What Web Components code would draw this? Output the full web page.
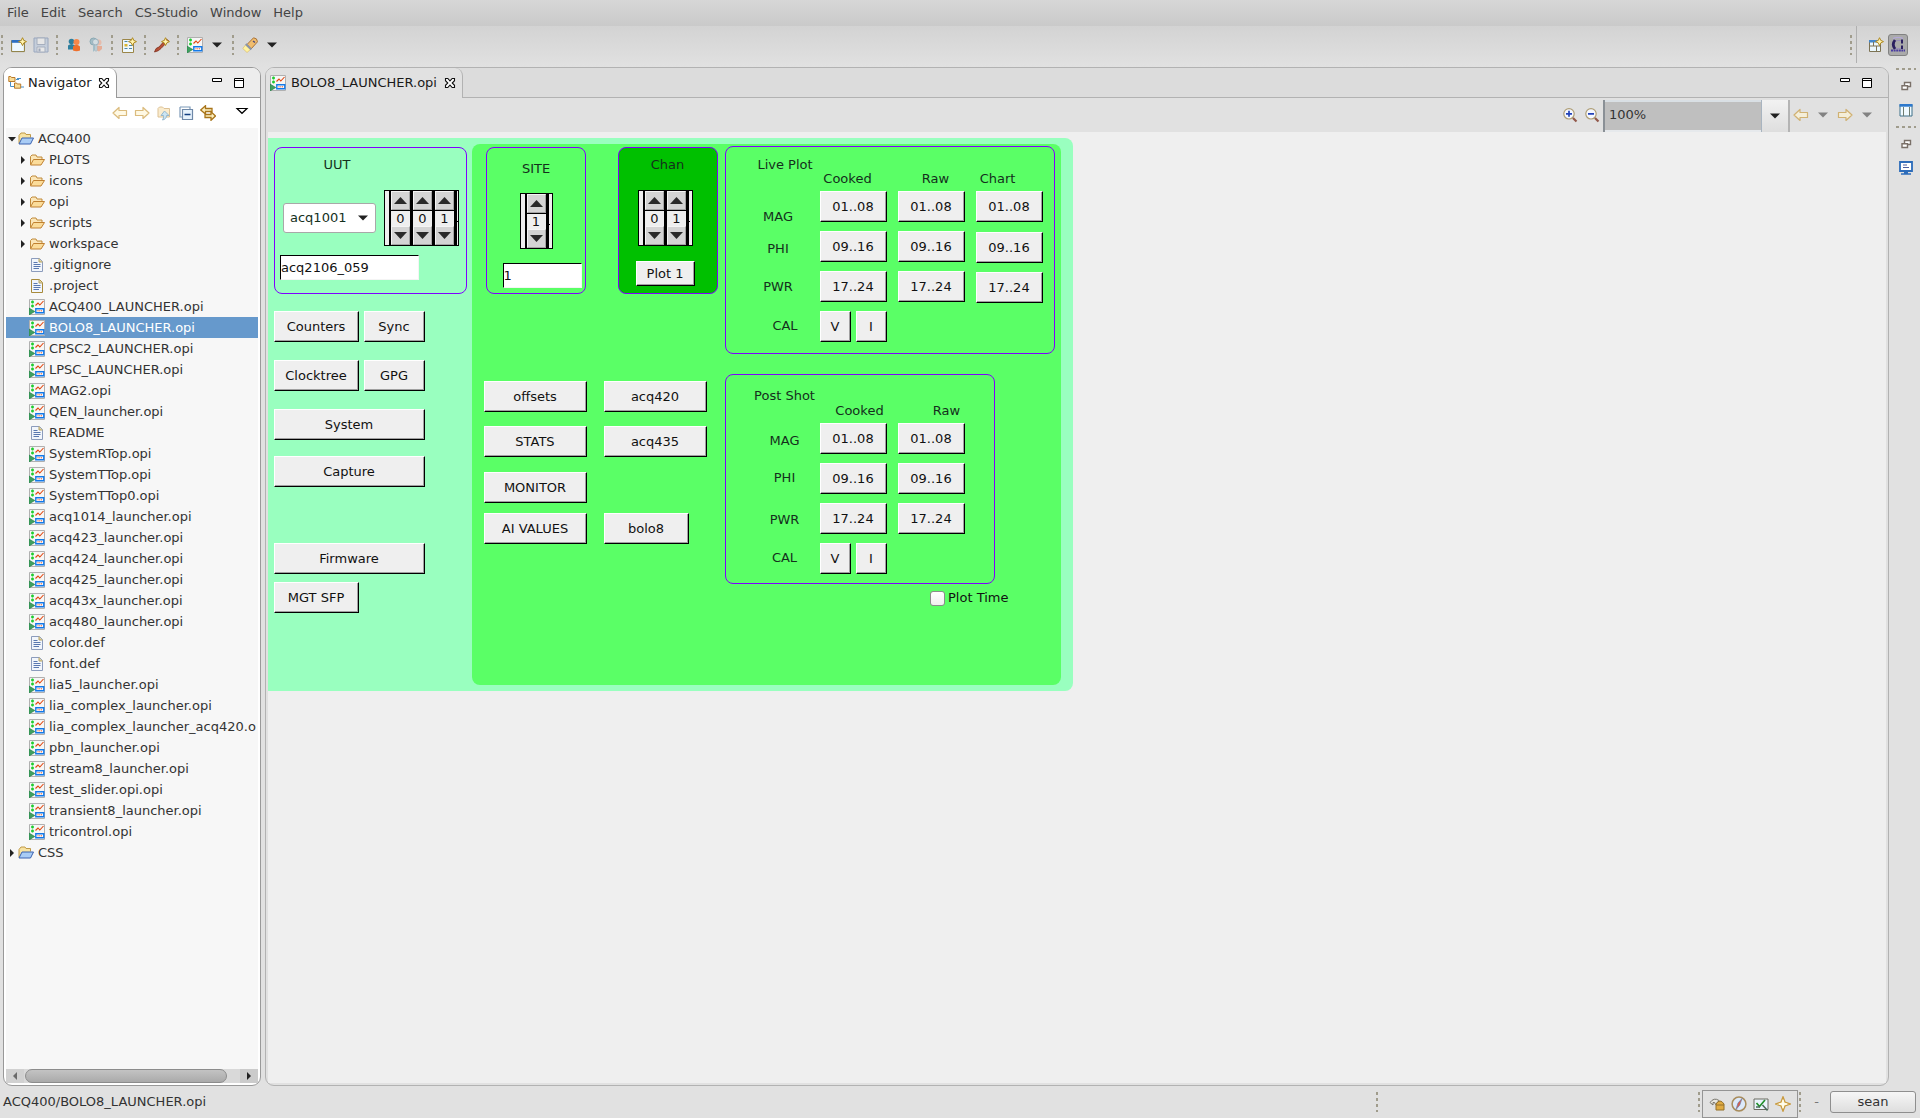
<!DOCTYPE html>
<html lang="en">
<head>
<meta charset="utf-8">
<title>CS-Studio</title>
<style>
html,body{margin:0;height:100%}
body{font-family:"DejaVu Sans",sans-serif;font-size:13px;line-height:20px;color:#333;background:#e1e1e1;overflow:hidden}
</style>
</head>
<body>
<cs-workbench></cs-workbench>
<script>
const reset = `*{box-sizing:border-box}button,input,select{font:inherit;color:inherit;margin:0;padding:0;border:0;border-radius:0;background:none}`;
function define(name, html, setup) {
  const t = document.createElement('template');
  t.innerHTML = html;
  customElements.define(name, class extends HTMLElement {
    constructor() {
      super();
      this.attachShadow({mode: 'open'});
    }
    connectedCallback() {
      if (this.shadowRoot.firstChild) return;
      this.shadowRoot.append(t.content.cloneNode(true));
      if (setup) setup.call(this, this.shadowRoot);
    }
  });
}

const arrow = (d, o) => `<path d="${d}" fill="#fff6d6" stroke="#c89838" stroke-width="1.2" stroke-linejoin="round" opacity="${o}"/>`;
const star = '<path d="M11.5 .7l1.3 2.7 2.7 1.2-2.7 1.3-1.3 2.7-1.2-2.7-2.8-1.3 2.8-1.2z" fill="#fff3b0" stroke="#b08a20"/>';
const page = (edge) => `<path d="M2.5 1.500h8l3 3v10h-11z" fill="#f2f6fc" stroke="${edge}"/><path d="M10 1.500v3.500h3.500" fill="#e2d49a" stroke="#b5a368"/><path d="M4.500 5.500h4M4.500 7.500h7M4.500 9.500h7M4.500 11.500h5.500" stroke="#5a78b0"/>`;
const icons = {
  opi: '<path d="M.5.500h15v15h-15z" fill="#f6f6f6" stroke="#b0b0b0"/><path d="M2 3h3M3.500 1.500v3M2 7h3M3.500 5.500v3" stroke="#1fcc2f" stroke-width="1.500"/><path d="M6.500 6.500L9 4l1.800 2 3.700-4" fill="none" stroke="#e2470f" stroke-width="1.100"/><path d="M6.800 9.800h8v4h-8z" fill="#fff" stroke="#1379e8" stroke-width="1.400"/><path d="M8.500 11.800h5" stroke="#e2470f" stroke-dasharray="1 .8"/><path d="M0 9l5.800 3.500L0 16z" fill="#3fa060" stroke="#1e7d42" stroke-width=".6"/>',
  project: '<path d="M1 12.500V4.500L3 2h4l1 1.500h4.500v3" fill="#f8e3a2" stroke="#c09a48"/><path d="M1 13L4 7h11.500l-3 6z" fill="#a9ccf5" stroke="#3a62b0"/>',
  folder: '<path d="M1.500 12.500v-8L3 3h4l1 2h5v2.500" fill="#fbe6b8" stroke="#c08a3a"/><path d="M1.500 13L4.500 7.500h11L12 13z" fill="#fbdc9a" stroke="#c08030"/>',
  file: page('#8c9cbc'), filegold: page('#a88a3a'),
  nav: '<path d="M.8 1.500h2l.7 1H7v4H.8zM6.500 8h2l.7 1h3.500v4.200H6.500z" fill="#f8dc98" stroke="#b97a2a"/><path d="M2.500 7v4.500H6M8 4.500h3M13 12h3" stroke="#4a90c8" fill="none"/><path d="M9 3.500h4" stroke="#4a90c8"/>',
  x: '<path d="M3.500 3.500h2.300L8 5.900l2.200-2.400h2.300v2.200L10.200 8l2.300 2.300v2.200h-2.300L8 10.100l-2.200 2.400H3.500v-2.200L5.800 8 3.500 5.700z" fill="#fff" stroke="#111" stroke-width="1.100"/>',
  min: '<path d="M3.500 3.500h9v3h-9z" fill="#fff" stroke="#000"/>',
  max: '<path d="M3.500 3.500h9v9h-9zM3.500 5.500h9" fill="#fff" stroke="#000"/>',
  back: arrow('M1 8l6-5.500v3h7.500v5H7v3z', .65), fwd: arrow('M15 8L9 2.500v3H1.500v5H9v3z', .65),
  up: '<g opacity=".6"><path d="M2 12V3.500L3.500 2h3L8 3.500h5.500V12z" fill="#f7dfae" stroke="#c79a50"/><path d="M8.500 6l4.500 4.500h-2.500c0 2.500-1.500 4-4 4.500 1-1.500 1.200-2.500 1-4.500H5z" fill="#a8d4ec" stroke="#4f88ac"/></g>',
  collapse: '<path d="M2 2h10v2M2 2v10h2" fill="none" stroke="#7d9ab8" stroke-width="1.200"/><path d="M4.500 4.500h10v10h-10z" fill="#e6f2fc" stroke="#6e88a8" stroke-width="1.200"/><path d="M6.500 9.500h6" stroke="#123f80" stroke-width="1.500"/>',
  link: '<path d="M.7 5L5.500.700V3.500H12v3H5.500v2.500zM15.500 11L11 6.800v2.700H5v3h6v2.800z" fill="#fdf0c0" stroke="#a8741a" stroke-width="1.300"/>',
  menu: '<path d="M3 3.500h10L8 8.300z" fill="#fff" stroke="#000" stroke-width="1.200"/>',
  tri: '<path d="M3 5.500h10L8 10.500z" fill="#222"/>', trig: '<path d="M3 5.500h10L8 10.500z" fill="#828282"/>',
  rt: '<path d="M6 4v8l4-4z" fill="#222"/>', dn: '<path d="M4 6h8l-4 4.500z" fill="#222"/>',
  neww: '<path d="M.6 3.600h12.800v11H.6z" fill="#eef8ff" stroke="#8a7a3c"/><path d="M.6 3h12.800v2.800H.6z" fill="#2d6fc2"/>' + star,
  save: '<g opacity=".55"><path d="M1 1h14v14H1z" fill="#b5c6dd" stroke="#667fa8"/><path d="M4 1h8v6.500H4zM4 10h8v5H4z" fill="#f2f2f2" stroke="#7c8ca8"/><path d="M5.500 11.500h2v3h-2z" fill="#6d7fa0"/></g>',
  users: '<circle cx="5.500" cy="4.500" r="2.800" fill="#2f7f9e"/><path d="M2 12.500V8.500q3.500-3 7 0v4z" fill="#2f7f9e"/><circle cx="10.500" cy="5" r="3" fill="#f5874a"/><path d="M7 13.500v-4q3.500-3.500 7 0v4q-3.500 1.500-7 0z" fill="#ee702c"/>',
  key: '<g opacity=".55"><circle cx="5.500" cy="4.500" r="3.500" fill="#78a9ba" stroke="#4b8294"/><path d="M5 8v7l2-2V8" fill="#78a9ba"/><circle cx="10.500" cy="5.500" r="3" fill="#f2a588"/><path d="M8 9h6v3l-3 2.500-2-1z" fill="#f08a60"/><circle cx="7.500" cy="5" r="3" fill="#cfe2ea" stroke="#6b93a8"/><path d="M7 8h2v6H7z" fill="#b9d2de" stroke="#6b93a8" stroke-width=".6"/></g>',
  doc: '<path d="M1.500 2.500h11v13h-11z" fill="#eef7fb" stroke="#9b8648"/><path d="M3.500 4.500h3M8 8.500h3M3.500 11.500h3M8 11.500h3" stroke="#4c88a8"/><path d="M3.500 7h3v2.500h-3z" fill="#d9b532"/>' + star,
  brush: '<path d="M.5 15q1-4.500 4.500-5L12 2l2.500 1.500L7 11.500Q5 14 .5 15z" fill="#b85036" stroke="#7c3020" stroke-width=".8"/>' + star,
  torch: '<path d="M.8 11.500L3.500 8l5 4.500-3.500 3z" fill="#fff3a0" stroke="#d6b460" stroke-width=".6"/><path d="M5 7.500L11.500.800q3.800.2 4 4L9 12z" fill="#f1bd6e" stroke="#a8733a"/><path d="M3.800 7l5.500 5.500" stroke="#8a94a8" stroke-width="2"/><path d="M11 4l2 1.500" stroke="#4a4a80" stroke-width="1.500"/>',
  zin: '<circle cx="7" cy="6.800" r="5.200" fill="#f5f8ff" stroke="#ae9d74" stroke-width="1.200"/><path d="M4 6.800h6M7 3.800v6" stroke="#2343b8" stroke-width="1.700"/><path d="M11 11l3.500 3.500" stroke="#92584a" stroke-width="2.200"/>',
  zout: '<circle cx="7" cy="6.800" r="5.200" fill="#f5f8ff" stroke="#ae9d74" stroke-width="1.200"/><path d="M4 6.800h6" stroke="#2343b8" stroke-width="1.700"/><path d="M11 11l3.500 3.500" stroke="#92584a" stroke-width="2.200"/>',
  persp: '<path d="M1.500 3.500h11v11h-11z" fill="#eaf7fc" stroke="#7c7354"/><path d="M1 3h12v2.500H1z" fill="#4387cc"/><path d="M1.500 9h11M5.500 5v4M8.500 9v5.500" stroke="#7c7354"/>' + star,
  css: '<path d="M3 1.500Q8-.5 13 1.500" fill="none" stroke="#b4a8d8" stroke-width="1.200"/><path d="M11.500 3.500H7Q4 3.500 4 7.500T7 11.500h4.500" fill="none" stroke="#9a8fb8" stroke-width="1"/><path d="M5 3Q1.500 7.500 5 12" fill="none" stroke="#2b2060" stroke-width="2.800"/><path d="M12 2.500v4M12 8.500v3.500" stroke="#2b2060" stroke-width="2"/><path d="M1 13.500h14" stroke="#4a3ca0" stroke-width="2" stroke-dasharray="2 .6"/>',
  restore: '<path d="M6.500 4.500h6v4h-6z" fill="#fff" stroke="#7a7068" stroke-width="1.400"/><path d="M4 7.700h5.500v3.800H4z" fill="#fff" stroke="#7a7068" stroke-width="1.400"/>',
  win: '<path d="M2 2.500h12v11.500H2z" fill="#f0faff" stroke="#3f7089"/><path d="M1.500 2h13v2.700h-13z" fill="#2d79cc"/><path d="M5.500 5v9M11.500 5v9" stroke="#6f7d70"/>',
  mon: '<path d="M2 2h12v9H2z" fill="#fff" stroke="#2c6cba" stroke-width="1.800"/><path d="M5 5h4M5 7.500h6" stroke="#4d5fa0"/><path d="M6 12.500h4M3 14h10" stroke="#2c6cba" stroke-width="1.300"/>',
  lock: '<path d="M1 6.500Q5 1 10 4.500l-3.500 4Q6 5.500 4 6.500v2.500z" fill="#e8e6de" stroke="#78756c"/><path d="M7 14V8q4-6 8 0v6z" fill="#e0ab42" stroke="#94702a"/><path d="M7 9h8" stroke="#94702a"/>',
  compass: '<circle cx="8" cy="8" r="6.900" fill="#dce9fa" stroke="#a88c5c" stroke-width="1.500"/><path d="M11 2.500L8.800 9 5 13.500 7 7z" fill="#e05a48" stroke="#6a80a8" stroke-width=".7"/>',
  check: '<path d="M1 3h14v10.500H1z" fill="#eaf4fc" stroke="#6b6b60"/><path d="M3.500 7l3 3.500L12 4" fill="none" stroke="#22902c" stroke-width="1.700"/><path d="M3 11h4M9.500 9l5 5.500" stroke="#4a6a5a" stroke-width="1.500"/>',
  spark: '<path d="M8 .8l2 5.200 5.200 2-5.200 2-2 5.200-2-5.200L.8 8 6 6z" fill="#fff6c8" stroke="#c89a40" stroke-width="1.300"/><path d="M8 4v8M4 8h8" stroke="#fff"/>'
};
customElements.define('ui-icon', class extends HTMLElement {
  static observedAttributes = ['name'];
  constructor() {
    super();
    this.attachShadow({mode: 'open'}).innerHTML = `<style>:host{display:block;flex:none;width:16px;height:16px}svg{display:block}</style><svg width="16" height="16" viewBox="0 0 16 16" aria-hidden="true"></svg>`;
  }
  attributeChangedCallback(_, old, value) {
    this.shadowRoot.querySelector('svg').innerHTML = icons[value] || '';
  }
});

define('tool-button', `<style>${reset}:host{display:block;flex:none}button{display:block}</style><button><ui-icon></ui-icon></button>`,
  function (r) {
    const n = this.getAttribute('icon');
    r.querySelector('button').setAttribute('aria-label', n);
    r.querySelector('ui-icon').setAttribute('name', n);
  });

define('drag-handle', `<style>:host{display:block;flex:none;width:2px;height:20px;background:repeating-linear-gradient(#a09c8c 0 3px,transparent 3px 6px)}:host([flat]){width:20px;height:2px;background:repeating-linear-gradient(90deg,#a09c8c 0 3px,transparent 3px 6px)}</style>`);

define('menu-bar', `<style>${reset}:host{display:block;background:linear-gradient(#d7d7d7,#cacaca)}nav{display:flex;gap:12px;padding:3px 7px}button{color:#444;line-height:20px}</style>
<nav><button>File</button><button>Edit</button><button>Search</button><button>CS-Studio</button><button>Window</button><button>Help</button></nav>`);

define('main-toolbar', `<style>${reset}
:host{display:flex;align-items:center;box-sizing:border-box;height:41px;padding:0 0 4px 1px;background:linear-gradient(#d3d3d3,#e1e1e1)}
.g{display:flex;gap:6px;align-items:center;padding:0 7px 0 8px}
.end{margin-left:auto;display:flex;align-items:center;align-self:stretch}
.rule{width:1px;align-self:stretch;background:#b0b0b0;margin:0 11px 0 4px}
.on{margin-left:4px;margin-right:12px;border:1px solid #828282;border-radius:3px;background:#aaa;padding:2px 1px}
</style>
<drag-handle></drag-handle><div class="g"><tool-button icon="neww"></tool-button><tool-button icon="save"></tool-button></div>
<drag-handle></drag-handle><div class="g"><tool-button icon="users"></tool-button><tool-button icon="key"></tool-button></div>
<drag-handle></drag-handle><div class="g"><tool-button icon="doc"></tool-button></div>
<drag-handle></drag-handle><div class="g"><tool-button icon="brush"></tool-button></div>
<drag-handle></drag-handle><div class="g"><tool-button icon="opi"></tool-button><tool-button icon="tri"></tool-button></div>
<drag-handle></drag-handle><div class="g"><tool-button icon="torch"></tool-button><tool-button icon="tri"></tool-button></div>
<div class="end"><drag-handle></drag-handle><div class="rule"></div><tool-button icon="persp"></tool-button><tool-button class="on" icon="css"></tool-button></div>`);

define('view-panel', `<style>${reset}
:host{--line:#999;--tab:#fff;--head:#ededed;display:flex;flex-direction:column;min-width:0;box-sizing:border-box;border:1px solid var(--line);border-radius:9px;background:var(--tab);overflow:hidden}
:host([kind=editor]){--line:#b2b2b2;--tab:#e1e1e1;--head:#dcdcdc}
header{display:flex;height:30px;background:linear-gradient(var(--line),var(--line)) bottom/100% 1px no-repeat var(--head)}
.tab{display:flex;align-items:center;gap:4px;padding:0 4px 0 4px;background:var(--tab);border-right:1px solid var(--line);border-radius:0 8px 0 0;color:#1a1a1a}
:host([kind=editor]) .tab{gap:5px}
.ctl{margin-left:auto;display:flex;gap:6px;align-items:center;padding-right:13px}
.bar{display:flex;align-items:center;justify-content:flex-end}
.body{flex:1;min-height:0;display:flex;flex-direction:column}
</style>
<header><div class="tab"><ui-icon></ui-icon><slot name="title"></slot><tool-button icon="x"></tool-button></div>
<div class="ctl"><tool-button icon="min"></tool-button><tool-button icon="max"></tool-button></div></header>
<div class="bar"><slot name="bar"></slot></div><div class="body"><slot></slot></div>`,
  function (r) { r.querySelector('ui-icon').setAttribute('name', this.getAttribute('icon')); });

define('nav-bar', `<style>${reset}:host{display:flex;gap:6px;align-items:center;height:30px;padding:0 10px 0 0}.m{margin-left:12px}</style>
<tool-button icon="back"></tool-button><tool-button icon="fwd"></tool-button><tool-button icon="up"></tool-button><tool-button icon="collapse"></tool-button><tool-button icon="link"></tool-button><tool-button class="m" icon="menu"></tool-button>`);

define('tree-item', `<style>${reset}
:host{display:flex;align-items:center;height:21px;padding-left:11px;white-space:nowrap}
:host([root]){padding-left:0}
:host([selected]){background:#6699cc;color:#fff}
.a{width:11px;height:16px;margin-right:1px;display:flex;justify-content:center;flex:none}
.t{margin-left:4px}</style><span class="a"></span><ui-icon class="i"></ui-icon><span class="t"><slot></slot></span>`,
  function (r) {
    const a = this.getAttribute('arrow');
    if (a) r.querySelector('.a').innerHTML = `<ui-icon name="${a}"></ui-icon>`;
    r.querySelector('.i').setAttribute('name', this.getAttribute('icon'));
    this.setAttribute('role', 'treeitem');
  });

define('file-tree', `<style>${reset}
:host{flex:1;display:flex;flex-direction:column;margin:0 2px 2px;background:#f7f7f7;overflow:hidden}
.rows{flex:1;overflow:hidden}
.sb{display:flex;height:14px;background:#d9d9d9}
.sb button{width:18px;background:#cbcbcb;display:flex;justify-content:center;align-items:center}
.sb button:first-child{opacity:.6}
.sb button:first-child ui-icon{rotate:180deg}
.track{flex:1;display:flex;padding-left:1px}.thumb{width:94%;border:1px solid #8c8c8c;border-radius:7px;background:linear-gradient(#c3c3c3,#aaa)}
</style><div class="rows" role="tree"></div><div class="sb"><button aria-label="Scroll left"><ui-icon name="rt"></ui-icon></button><div class="track"><div class="thumb"></div></div><button aria-label="Scroll right"><ui-icon name="rt"></ui-icon></button></div>`,
  function (r) {
    const row = (text, icon, extra = '') => `<tree-item icon="${icon}" ${extra}>${text}</tree-item>`;
    let h = row('ACQ400', 'project', 'root arrow="dn"');
    h += ['PLOTS', 'icons', 'opi', 'scripts', 'workspace'].map(n => row(n, 'folder', 'arrow="rt"')).join('');
    h += ['.gitignore', '.project', 'ACQ400_LAUNCHER.opi', 'BOLO8_LAUNCHER.opi', 'CPSC2_LAUNCHER.opi', 'LPSC_LAUNCHER.opi', 'MAG2.opi', 'QEN_launcher.opi', 'README', 'SystemRTop.opi', 'SystemTTop.opi', 'SystemTTop0.opi', 'acq1014_launcher.opi', 'acq423_launcher.opi', 'acq424_launcher.opi', 'acq425_launcher.opi', 'acq43x_launcher.opi', 'acq480_launcher.opi', 'color.def', 'font.def', 'lia5_launcher.opi', 'lia_complex_launcher.opi', 'lia_complex_launcher_acq420.opi', 'pbn_launcher.opi', 'stream8_launcher.opi', 'test_slider.opi.opi', 'transient8_launcher.opi', 'tricontrol.opi']
      .map(n => row(n === 'lia_complex_launcher_acq420.opi' ? 'lia_complex_launcher_acq420.o' : n, n.endsWith('.opi') ? 'opi' : n === '.project' ? 'filegold' : 'file', n.startsWith('BOLO8') ? 'selected' : '')).join('');
    h += row('CSS', 'project', 'root arrow="rt"');
    r.querySelector('.rows').innerHTML = h;
  });

define('zoom-bar', `<style>${reset}
:host{display:flex;align-items:center;gap:6px;height:34px;padding-right:13px}
.combo{display:flex;align-self:stretch;width:187px;margin:2px -3px 0 -3px;border-left:2px solid #8a9096;border-right:2px solid #b4b4b4}
input{flex:1;min-width:0;background:#bfbfbf;color:#333;padding:0 4px 2px;border-top:2px solid #d9dfe4;border-bottom:2px solid #e6e9ec}
.combo button{width:27px;display:flex;align-items:center;justify-content:center;background:linear-gradient(#f2f2f2,#dedede);border-left:1px solid #a8b4c0}
</style>
<tool-button icon="zin"></tool-button><tool-button icon="zout"></tool-button><div class="combo"><input aria-label="Zoom" value="100%"><button aria-label="Zoom levels"><ui-icon name="tri"></ui-icon></button></div>
<tool-button icon="back"></tool-button><tool-button icon="trig"></tool-button><tool-button icon="fwd"></tool-button><tool-button icon="trig"></tool-button>`);

define('action-button', `<style>${reset}
:host{display:block;flex:none;width:67px;height:31px}
:host([w="31"]){width:31px}:host([w="61"]){width:61px}:host([w="85"]){width:85px}:host([w="103"]){width:103px}:host([w="151"]){width:151px}
:host([small]){width:59px;height:25px}
button{display:block;width:100%;height:100%;color:#111;background:#efefef;border:1px solid;border-color:#fff #000 #000 #fff;box-shadow:inset -1px -1px #a0a0a0;white-space:nowrap;line-height:20px;padding-right:1px}
</style><button><slot></slot></button>`);

define('group-box', `<style>:host{display:flex;flex-direction:column;flex:none;box-sizing:border-box;border:1px solid #8000ff;border-radius:8px;color:#14301c}</style><slot></slot>`);

define('thumb-wheel', `<style>${reset}
:host{display:inline-flex;flex:none;border:1px solid #000;background:#efefef;color:#111}
.d{display:flex;margin-left:4px;background:#000;padding-left:2px}
.c{width:22px;padding-right:3px}
button{display:flex;align-items:center;justify-content:center;width:19px;height:19px;background:#d4d4d4;border:1px solid;border-color:#f4f4f4 #a4a4a4 #a4a4a4 #f4f4f4}
output{display:block;height:15px;margin:1px 0 0;line-height:15px;text-align:center;background:#efefef}
.e{width:3px}:host([tight]) .e{width:1px}
.p{width:1px;height:1px;background:#000;margin-top:30px}
</style><div class="d"></div><div class="e"><div class="p"></div></div>`,
  function (r) {
    r.querySelector('.d').innerHTML = [...this.getAttribute('value')].map(v => `<div class="c"><button aria-label="Increase"><svg width="13" height="7"><path d="M0 7h13L6.500 0z" fill="#2a2a2a"/></svg></button><output>${v}</output><button aria-label="Decrease"><svg width="13" height="7"><path d="M0 0h13L6.500 7z" fill="#2a2a2a"/></svg></button></div>`).join('');
  });

define('text-entry', `<style>${reset}:host{display:block;flex:none}input{display:block;width:100%;height:25px;background:#fff;color:#111;border:1px solid;border-color:#000 #f4f4f4 #f4f4f4 #000}</style><input>`,
  function (r) {
    const i = r.querySelector('input');
    i.value = this.getAttribute('value');
    i.setAttribute('aria-label', this.getAttribute('label'));
  });

define('plot-matrix', `<style>${reset}
:host{display:flex;width:328px;height:206px}
:host([post]){width:268px;height:208px}
.lab{width:94px;display:grid;text-align:center;white-space:nowrap;padding-top:8px;grid-template-rows:52px 32px 38px 39px 20px}
.lab span{padding-left:10px}.lab .w{padding-left:24px}
:host([post]) .lab{padding-top:11px;grid-template-rows:45px 37px 42px 38px 20px}
:host([post]) .lab span{padding-left:23px}
.col{display:flex;flex-direction:column;gap:9px;width:67px;margin-right:11px;padding-top:22px}
:host([post]) .col{padding-top:26px}
.h{flex:none;text-align:center;height:22px;margin-bottom:-9px;white-space:nowrap}
.cooked{padding-right:12px}.raw{padding-left:8px}.chart{padding-right:24px}
.chart+*{margin-bottom:1px}
:host([post]) .cooked{padding:0 0 0 12px}:host([post]) .raw{padding-left:30px}
.two{display:flex;gap:5px}
.col:last-child{margin-right:0}
</style>
<div class="lab"><span class="w"><slot></slot></span><span>MAG</span><span>PHI</span><span>PWR</span><span class="w">CAL</span></div>
<div class="col"><div class="h cooked">Cooked</div><action-button>01..08</action-button><action-button>09..16</action-button><action-button>17..24</action-button><div class="two"><action-button w="31">V</action-button><action-button w="31">I</action-button></div></div>
<div class="col"><div class="h raw">Raw</div><action-button>01..08</action-button><action-button>09..16</action-button><action-button>17..24</action-button></div>`,
  function (r) {
    if (!this.hasAttribute('post'))
      r.append(Object.assign(document.createElement('div'), {className: 'col', innerHTML: '<div class="h chart">Chart</div><action-button>01..08</action-button><action-button>09..16</action-button><action-button>17..24</action-button>'}));
  });

define('opi-display', `<style>${reset}
:host{display:flex;align-self:flex-start;flex:none;background:#99ffbf;border-radius:0 8px 8px 0;color:#111}
.left{width:204px;padding:9px 0 0 6px;display:flex;flex-direction:column;align-items:flex-start}
.uut{width:193px;height:147px;padding-top:7px}
.uut .l{width:124px;text-align:center}
.r{display:flex;align-items:center}
.uut .r{margin:15px 0 9px;padding-left:8px;gap:8px}
.sel{display:grid;align-items:center;width:93px}
.sel>*{grid-area:1/1}.sel ui-icon{justify-self:end;margin-right:5px;pointer-events:none}
select{appearance:none;width:93px;height:30px;background:#fff;border:1px solid #a8a8a8;border-radius:3px;padding:0 6px}
.uut text-entry{width:139px;margin-left:5px}
.b{display:flex;gap:5px}
.b1{margin-top:17px}.b2{margin-top:18px}.b3{margin-top:16px}.b4{margin-top:56px}.b5{margin-top:8px}
.main{margin:6px 12px 6px 0;background:#5aff66;border-radius:8px;display:flex;width:589px;padding-bottom:76px}
.mid{width:253px;padding-top:3px}
.tops{display:flex;gap:32px;padding-left:14px;margin-bottom:87px}
.site,.chan{width:100px;height:147px;align-items:center}
.site{padding-top:11px}.site thumb-wheel{margin:14px 0}.site text-entry{width:79px;margin-left:12px}
.chan{padding:7px 5px 0 0;background:#00c000}.chan div{padding-left:4px}.chan thumb-wheel{margin:15px 0}
.row{display:flex;gap:17px;padding-left:12px;margin-bottom:14px}.row.m{margin-bottom:15px}.row.n{margin-bottom:10px}
.rt{padding-top:2px}
.post{width:270px;margin:20px 0 4px}
label{display:flex;align-items:center;gap:3px;margin:0 0 1px 205px}
input{appearance:none;width:15px;height:15px;border:1px solid #8c8c8c;border-radius:3px;background:linear-gradient(#fff,#f0f0f0)}
</style>
<div class="left">
<group-box class="uut"><div class="l">UUT</div><div class="r"><div class="sel"><select aria-label="UUT"><option>acq1001</option></select><ui-icon name="tri"></ui-icon></div><thumb-wheel tight value="001"></thumb-wheel></div><text-entry label="UUT name" value="acq2106_059"></text-entry></group-box>
<div class="b b1"><action-button w="85">Counters</action-button><action-button w="61">Sync</action-button></div>
<div class="b b2"><action-button w="85">Clocktree</action-button><action-button w="61">GPG</action-button></div>
<action-button class="b2" w="151">System</action-button>
<action-button class="b3" w="151">Capture</action-button>
<action-button class="b4" w="151">Firmware</action-button>
<action-button class="b5" w="85">MGT SFP</action-button>
</div>
<div class="main"><div class="mid"><div class="tops">
<group-box class="site"><div>SITE</div><thumb-wheel value="1"></thumb-wheel><text-entry label="Site" value="1"></text-entry></group-box>
<group-box class="chan"><div>Chan</div><thumb-wheel value="01"></thumb-wheel><action-button small>Plot 1</action-button></group-box></div>
<div class="row"><action-button w="103">offsets</action-button><action-button w="103">acq420</action-button></div>
<div class="row m"><action-button w="103">STATS</action-button><action-button w="103">acq435</action-button></div>
<div class="row n"><action-button w="103">MONITOR</action-button></div>
<div class="row"><action-button w="103">AI VALUES</action-button><action-button w="85">bolo8</action-button></div></div>
<div class="rt"><group-box><plot-matrix>Live Plot</plot-matrix></group-box>
<group-box class="post"><plot-matrix post>Post Shot</plot-matrix></group-box>
<label><input type="checkbox">Plot Time</label></div></div>`);

define('opi-canvas', `<style>:host{flex:1;display:flex;margin:0 2px 2px;padding-top:6px;background:#efefef;overflow:hidden}</style><opi-display></opi-display>`);

define('side-trim', `<style>:host{width:31px;flex:none;box-sizing:border-box;display:flex;flex-direction:column;align-items:center;padding:1px 0 0 2px}.a{margin:8px 0}.b{margin-bottom:8px}</style>
<drag-handle flat></drag-handle><tool-button class="a" icon="restore"></tool-button><tool-button class="b" icon="win"></tool-button><drag-handle flat></drag-handle><tool-button class="a" icon="restore"></tool-button><tool-button icon="mon"></tool-button>`);

define('status-bar', `<style>${reset}
:host{display:flex;align-items:center;height:32px;flex:none}
.p{flex:1;padding-left:3px}
.gap{width:320px}
.box{display:flex;gap:6px;border:1px solid #949494;padding:6px 6px;margin:4px 1px 0 2px;align-self:stretch;align-items:center;height:28px}
.d{padding:0 11px 0 13px;color:#777}
.u{width:86px;height:22px;margin-right:4px;border:1px solid #8e8e8e;border-radius:3px;background:linear-gradient(#f6f6f6,#dedede);color:#333}
</style><span class="p">ACQ400/BOLO8_LAUNCHER.opi</span><drag-handle></drag-handle><span class="gap"></span><drag-handle></drag-handle><div class="box"><tool-button icon="lock"></tool-button><tool-button icon="compass"></tool-button><tool-button icon="check"></tool-button><tool-button icon="spark"></tool-button></div><drag-handle></drag-handle><span class="d">-</span><button class="u">sean</button>`);

define('cs-workbench', `<style>${reset}
:host{display:flex;flex-direction:column;height:100vh}
main{flex:1;min-height:0;display:flex;padding-left:3px}
.nav{width:258px;flex:none;margin-right:4px}.ed{flex:1}
</style><menu-bar></menu-bar><main-toolbar></main-toolbar>
<main><view-panel class="nav" icon="nav"><span slot="title">Navigator</span><nav-bar slot="bar"></nav-bar><file-tree></file-tree></view-panel>
<view-panel class="ed" kind="editor" icon="opi"><span slot="title">BOLO8_LAUNCHER.opi</span><zoom-bar slot="bar"></zoom-bar><opi-canvas></opi-canvas></view-panel><side-trim></side-trim></main>
<status-bar></status-bar>`);
</script>
</body>
</html>
